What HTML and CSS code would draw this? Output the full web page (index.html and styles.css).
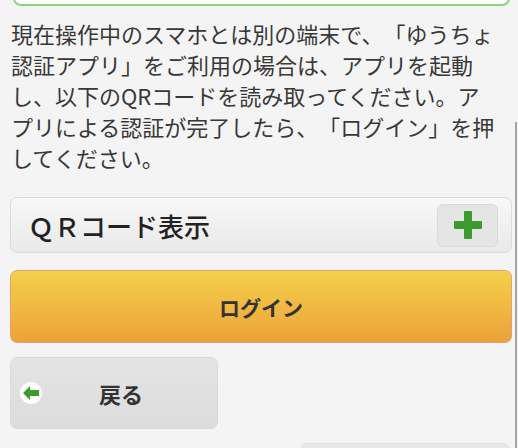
FILE: index.html
```html
<!DOCTYPE html>
<html lang="ja">
<head>
  <meta charset="UTF-8">
  <meta name="viewport" content="width=device-width, initial-scale=1.0">
  <title>ログイン</title>
  <link rel="stylesheet" href="styles.css">
</head>
<body>
  <div class="notice"></div>

  <div class="content">
    <p class="lead">現在操作中のスマホとは別の端末で、「ゆうちょ認証アプリ」をご利用の場合は、アプリを起動し、以下のQRコードを読み取ってください。アプリによる認証が完了したら、「ログイン」を押してください。</p>

    <div class="toggle-box">
      <span class="toggle-title">ＱＲコード表示</span>
      <button class="toggle-btn" type="button">
        <svg width="30" height="30" viewBox="0 0 30 30">
          <rect x="11" y="1" width="8" height="28" rx="1" fill="#3c9a2e"/>
          <rect x="1" y="11" width="28" height="8" rx="1" fill="#3c9a2e"/>
        </svg>
      </button>
    </div>

    <button class="login-btn" type="button">ログイン</button>

    <button class="back-btn" type="button">
      <span class="back-icon">
        <svg width="16" height="14" viewBox="0 0 16 14">
          <path d="M0 7 L7 0 L7 4 L16 4 L16 10 L7 10 L7 14 Z" fill="#3c9a2e"/>
        </svg>
      </span>
      <span class="back-label">戻る</span>
    </button>

    <div class="next-row">
      <button class="next-btn" type="button"></button>
    </div>
  </div>

  <div class="scroll-bar"></div>
</body>
</html>
```

FILE: styles.css
```css
body {
  margin: 0;
  background-color: #f4f4f4;
  font-family: "Noto Sans CJK JP", "Noto Sans", sans-serif;
  color: #333;
  overflow: hidden;
  text-spacing-trim: space-all;
}
.notice {
  height: 20px;
  margin: -18px 8px 0 13px;
  border: 2px solid #8fd07e;
  border-radius: 8px;
  background-color: #fff;
}
.content {
  padding: 0 6px 0 10px;
}
.lead {
  margin: 12px 0 24px 1px;
  width: 487px;
  font-size: 22px;
  line-height: 31px;
  color: #383838;
}
.toggle-box {
  display: flex;
  align-items: center;
  justify-content: space-between;
  height: 54px;
  padding: 0 13px 0 17px;
  border: 1px solid #dcdcdc;
  border-radius: 7px;
  background: linear-gradient(#f8f8f8, #e9e9e9);
}
.toggle-title {
  font-size: 26px;
  font-weight: 500;
  color: #222;
}
.toggle-btn {
  width: 61px;
  height: 43px;
  display: flex;
  align-items: center;
  justify-content: center;
  border: 1px solid #dadada;
  border-radius: 6px;
  background: #e5e5e5;
  padding: 0;
}
.login-btn {
  display: block;
  width: 100%;
  height: 73px;
  margin-top: 17px;
  border: 1px solid #e6a274;
  border-radius: 7px;
  background: linear-gradient(#f4d04a, #eca23a);
  font-family: inherit;
  font-size: 21px;
  font-weight: bold;
  color: #333;
}
.back-btn {
  display: flex;
  align-items: center;
  width: 208px;
  height: 72px;
  margin-top: 14px;
  padding: 0 17px 0 9px;
  border: 1px solid #dadada;
  border-radius: 7px;
  background: linear-gradient(#e4e4e4, #dcdcdc);
  font-family: inherit;
  font-size: 22px;
  font-weight: bold;
  color: #333;
}
.back-icon {
  width: 22px;
  height: 22px;
  border-radius: 50%;
  background-color: #fff;
  display: flex;
  align-items: center;
  justify-content: center;
}
.back-label {
  flex: 1;
  text-align: center;
}
.next-row {
  display: flex;
  justify-content: flex-end;
  padding-right: 2px;
  margin-top: 14px;
}
.next-btn {
  width: 210px;
  height: 60px;
  border: 1px solid #e0e0e0;
  border-radius: 7px;
  background: #e8e8e8;
}
.scroll-bar {
  position: absolute;
  top: 122px;
  left: 515px;
  width: 2px;
  height: 340px;
  background-color: #a5a5a5;
}
```
